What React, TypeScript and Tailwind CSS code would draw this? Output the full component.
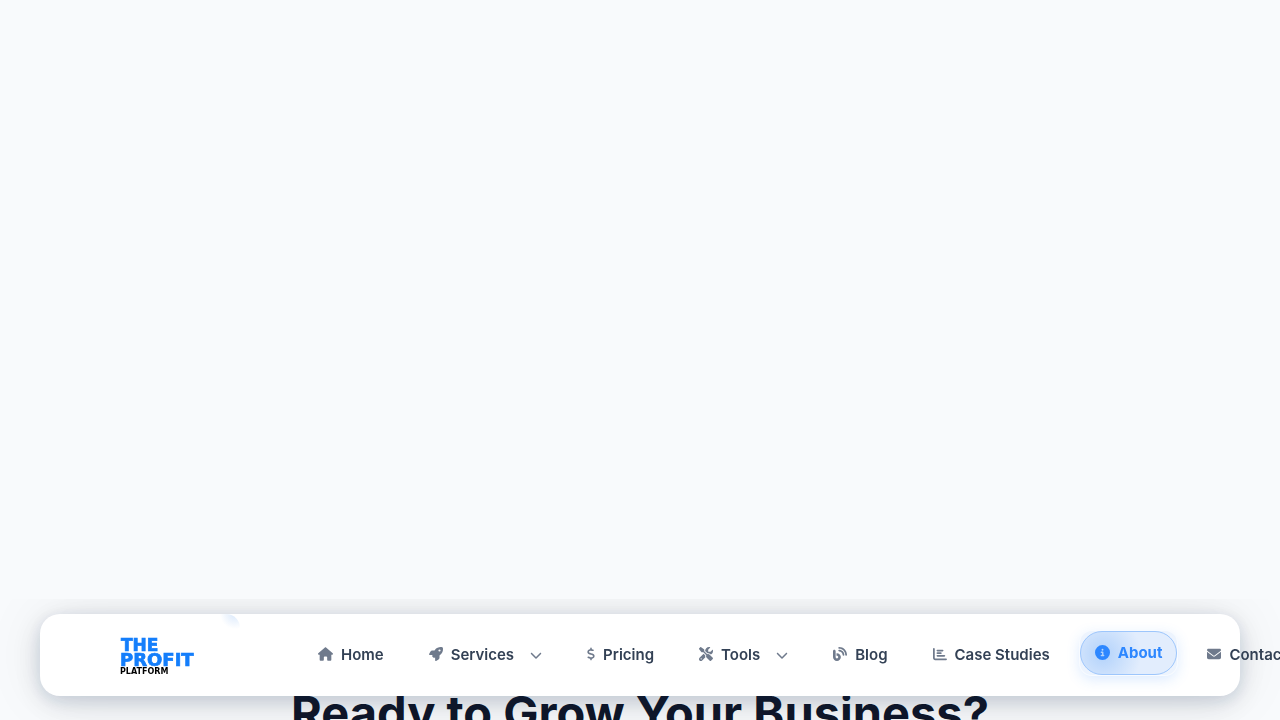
import { FaBlog, FaChartBar, FaChevronDown, FaCircleInfo, FaDollarSign, FaEnvelope, FaHouse, FaRocket, FaScrewdriverWrench } from "react-icons/fa6";
import type { IconType } from "react-icons";

type Item = { label: string; icon: IconType; size: string; menu?: boolean; active?: boolean };

const items: Item[] = [
  { label: "Home", icon: FaHouse, size: "h-4 w-[15px]" },
  { label: "Services", icon: FaRocket, size: "h-[14px] w-[14px]", menu: true },
  { label: "Pricing", icon: FaDollarSign, size: "h-[14px] w-2" },
  { label: "Tools", icon: FaScrewdriverWrench, size: "h-[14px] w-[14px]", menu: true },
  { label: "Blog", icon: FaBlog, size: "h-[14px] w-[14px]" },
  { label: "Case Studies", icon: FaChartBar, size: "h-[14px] w-[14px]" },
  { label: "About", icon: FaCircleInfo, size: "h-[15px] w-[15px]", active: true },
  { label: "Contact", icon: FaEnvelope, size: "h-[14px] w-[14px]" },
];

const base = "relative flex h-11 items-center gap-2 whitespace-nowrap px-[15px] text-[15px]";
const idle = "font-semibold text-[#334155]";
const current =
  "-translate-y-0.5 rounded-xl bg-[#edf4fe] font-bold text-[#2d87ff] shadow-[0_0_0_1px_#f8fbff,0_4px_14px_rgba(45,135,255,0.18)]";

function NavItem({ label, icon: Icon, size, menu, active }: Item) {
  return (
    <li>
      <a href="#" aria-current={active ? "page" : undefined} className={`${base} ${active ? current : idle}`}>
        {active && (
          <span className="absolute inset-0 rounded-full border border-[#9dc6fc] bg-radial-[circle_at_22px_22px] from-[#b2d2fb] to-[#e2edfd] to-50%" />
        )}
        <Icon className={`relative mb-0.5 ${size} ${active ? "" : "text-[#6f7a8c]"}`} />
        <span className="relative">{label}</span>
        {menu && <FaChevronDown className="ml-2 h-3 w-3 text-[#6f7a8c]" />}
      </a>
    </li>
  );
}

function Logo() {
  return (
    <svg width="80" height="40" viewBox="0 0 80 40" role="img" aria-label="The Profit Platform" className="font-['DejaVu_Sans',sans-serif] font-bold">
      <g fill="#147efb" stroke="#147efb" strokeWidth="0.7">
        <text x="1" y="16" fontSize="17">THE</text>
        <text x="0" y="31" fontSize="18">PROFIT</text>
      </g>
      <text x="0" y="39" fontSize="8" fill="#000">PLATFORM</text>
    </svg>
  );
}

export default function App() {
  return (
    <div className="h-screen overflow-hidden bg-[#f8fafc] font-['Inter',sans-serif]">
      <main className="flex h-full flex-col">
        <div className="flex-1" />
        <h2 className="-mb-[22px] text-center text-[47px] leading-[58px] font-bold text-[#0f172a]">Ready to Grow Your Business?</h2>
      </main>
      <header className="fixed inset-x-0 bottom-0 overflow-hidden px-10 pt-[15px] pb-6">
        <nav className="relative flex h-[82px] items-center rounded-[20px] bg-white pl-20 shadow-[0_8px_32px_rgba(15,23,42,0.12),0_4px_16px_rgba(30,80,140,0.12),0_0_60px_rgba(15,23,42,0.08)]">
          <span className="absolute top-0 left-[180px] size-5 rounded-tr-[14px] bg-radial-[circle_at_75%_0%] from-[#dbe9fb] to-white to-60%" />
          <a href="#" className="w-[183px] shrink-0">
            <Logo />
          </a>
          <ul className="flex items-center gap-[15px]">
            {items.map((item) => (
              <NavItem key={item.label} {...item} />
            ))}
          </ul>
        </nav>
      </header>
    </div>
  );
}
